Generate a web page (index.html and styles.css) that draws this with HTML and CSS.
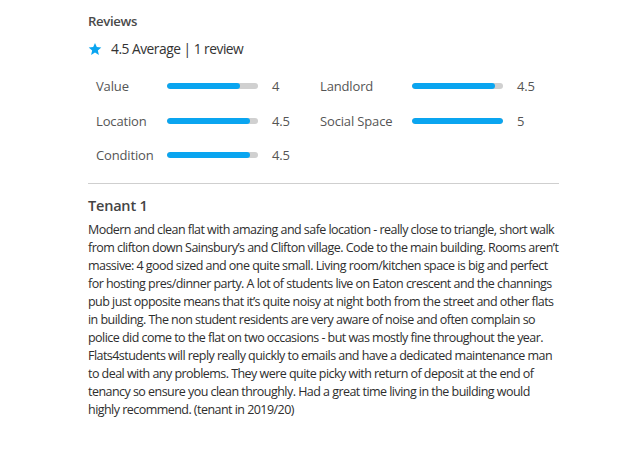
FILE: index.html
```html
<!DOCTYPE html>
<html>
<head>
<meta charset="utf-8">
<link rel="stylesheet" href="styles.css">
</head>
<body>
<section class="reviews">
  <h2 class="title">Reviews</h2>
  <div class="summary">
    <svg class="star" viewBox="0 0 24 24" width="14" height="14"><path d="M12 1.5l3.1 7.2 7.7.7-5.9 5.1 1.8 7.6L12 18.1l-6.7 4 1.8-7.6-5.9-5.1 7.7-.7z" fill="#0aa5f0"/></svg>
    <span>4.5 Average | 1 review</span>
  </div>
  <div class="ratings">
    <span class="label">Value</span>
    <span class="bar"><span class="fill" style="width:80%"></span></span>
    <span class="num">4</span>
    <span class="label">Landlord</span>
    <span class="bar"><span class="fill" style="width:91%"></span></span>
    <span class="num">4.5</span>

    <span class="label">Location</span>
    <span class="bar"><span class="fill" style="width:91%"></span></span>
    <span class="num">4.5</span>
    <span class="label">Social Space</span>
    <span class="bar"><span class="fill" style="width:100%"></span></span>
    <span class="num">5</span>

    <span class="label">Condition</span>
    <span class="bar"><span class="fill" style="width:91%"></span></span>
    <span class="num">4.5</span>
  </div>
  <hr class="divider">
  <h3 class="tenant">Tenant 1</h3>
  <p class="text">Modern and clean flat with amazing and safe location - really close to triangle, short walk from clifton down Sainsbury’s and Clifton village. Code to the main building. Rooms aren’t massive: 4 good sized and one quite small. Living room/kitchen space is big and perfect for hosting pres/dinner party. A lot of students live on Eaton crescent and the channings pub just opposite means that it’s quite noisy at night both from the street and other flats in building. The non student residents are very aware of noise and often complain so police did come to the flat on two occasions - but was mostly fine throughout the year. Flats4students will reply really quickly to emails and have a dedicated maintenance man to deal with any problems. They were quite picky with return of deposit at the end of tenancy so ensure you clean throughly. Had a great time living in the building would highly recommend. (tenant in 2019/20)</p>
</section>
</body>
</html>
```
FILE: styles.css
```css
html, body {
  margin: 0;
  padding: 0;
  background: #fff;
}
body {
  font-family: "Open Sans", "Noto Sans", sans-serif;
  color: #3d3d3d;
}
.reviews {
  width: 471px;
  margin-left: 88px;
  padding-top: 11px;
}
.title {
  margin: 0;
  font-size: 13.2px;
  font-weight: 600;
  letter-spacing: -0.35px;
  line-height: 20px;
  color: #4a4a4a;
}
.summary {
  display: flex;
  align-items: center;
  gap: 9px;
  margin-top: 8px;
  font-size: 13.8px;
  letter-spacing: -0.5px;
  line-height: 20px;
  color: #333;
}
.star {
  display: block;
}
.ratings {
  display: grid;
  grid-template-columns: 71px 91px 62px 92px 91px auto;
  grid-auto-rows: 20px;
  row-gap: 14.5px;
  align-items: center;
  margin: 17px 0 0 8px;
  font-size: 13px;
  letter-spacing: -0.15px;
  color: #555;
}
.label {
  white-space: nowrap;
}
.bar {
  display: block;
  height: 6px;
  border-radius: 3px;
  background: #d0d0d0;
  overflow: hidden;
}
.fill {
  display: block;
  height: 100%;
  border-radius: 3px;
  background: #0aa5f0;
}
.num {
  padding-left: 14px;
}
.divider {
  border: 0;
  border-top: 1px solid #cfcfcf;
  margin: 18px 0 0;
}
.tenant {
  margin: 12px 0 0;
  font-size: 14.5px;
  font-weight: 600;
  letter-spacing: -0.2px;
  line-height: 20px;
  color: #444;
}
.text {
  width: 474px;
  margin: 5px 0 0;
  font-size: 12.5px;
  letter-spacing: -0.54px;
  line-height: 18px;
  color: #2e2e2e;
}
```
